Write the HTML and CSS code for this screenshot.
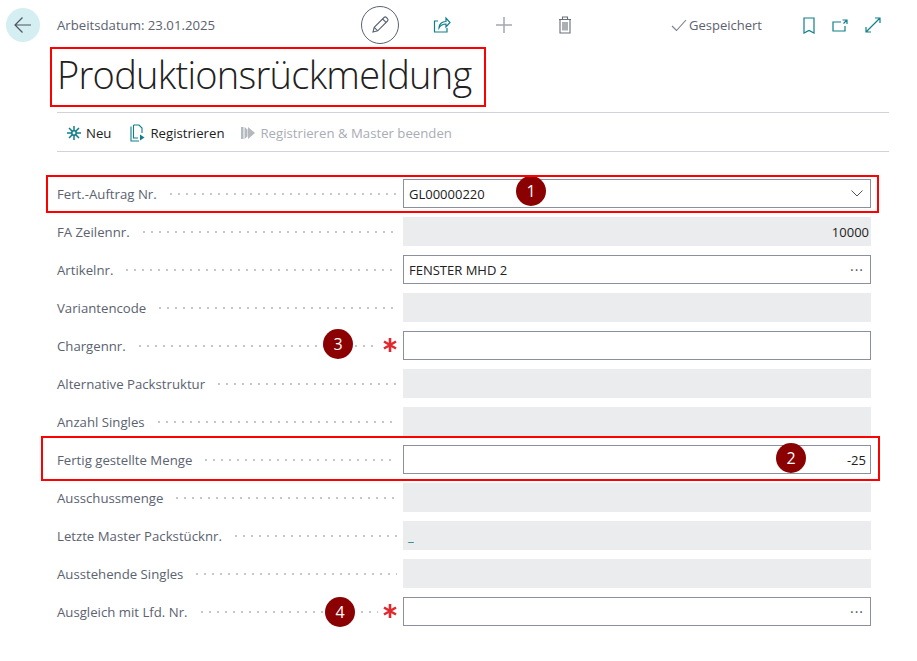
FILE: index.html
```html
<!DOCTYPE html>
<html lang="de">
<head>
    <meta charset="UTF-8">
    <title>Produktionsrückmeldung</title>
    <link rel="stylesheet" href="styles.css">
</head>
<body>
    <div class="topbar">
        <button class="back-btn" aria-label="Zurück">
            <svg width="20" height="20" viewBox="0 0 20 20" fill="none" stroke="#4f5563" stroke-width="1.2"><path d="M18 10H2.500M9.500 2.500 2 10l7.500 7.500"/></svg>
        </button>
        <div class="work-date">Arbeitsdatum: 23.01.2025</div>
        <button class="edit-btn" aria-label="Bearbeiten">
            <svg width="20" height="20" viewBox="0 0 20 20" fill="none" stroke="#5b6270" stroke-width="1.1"><path d="M3 17l1.200-4.700L14 2.500a1.700 1.700 0 0 1 2.400 0l1.100 1.100a1.700 1.700 0 0 1 0 2.400L7.700 15.800zM4.200 12.300l3.500 3.500M12.600 4l3.400 3.400"/></svg>
        </button>
        <svg class="icon-share" width="18" height="18" viewBox="0 0 18 18" fill="none" stroke="#0f7f8a" stroke-width="1.2"><path d="M5 5H1.500v11h12.500v-4M6 12c0-4 3-6.500 7-6.500V2l4 4.500-4 4.500V8c-3 0-5.500 1.500-7 4z"/></svg>
        <svg class="icon-plus" width="18" height="18" viewBox="0 0 18 18" fill="none" stroke="#a3a8b0" stroke-width="1.5"><path d="M9 1v16M1 9h16"/></svg>
        <svg class="icon-trash" width="14" height="18" viewBox="0 0 14 18" fill="none" stroke="#686e7a" stroke-width="1.1"><path d="M1 3.500h12M4.500 3.500V1h5v2.500M2 3.500V17h10V3.500M5 6v8.500M7 6v8.500M9 6v8.500"/></svg>
        <div class="saved">
            <svg width="16" height="14" viewBox="0 0 16 14" fill="none" stroke="#777d89" stroke-width="1.1"><path d="M1 8l4.500 4.500L15 2"/></svg>
            <span>Gespeichert</span>
        </div>
        <svg class="icon-bookmark" width="12" height="17" viewBox="0 0 12 17" fill="none" stroke="#0f7f8a" stroke-width="1.2"><path d="M1 1h10v15l-5-2.500L1 16z"/></svg>
        <svg class="icon-open" width="16" height="13" viewBox="0 0 16 13" fill="none" stroke="#0f7f8a" stroke-width="1.2"><path d="M9 3H1v9h12V7M10.500 1H15v4M15 1l-3.500 3.500"/></svg>
        <svg class="icon-expand" width="16" height="16" viewBox="0 0 16 16" fill="none" stroke="#0f7f8a" stroke-width="1.2"><path d="M10 1h5v5M15 1 1 15M1 10v5h5"/></svg>
    </div>

    <h1 class="title">Produktionsrückmeldung</h1>

    <div class="actions">
        <span class="action">
            <svg width="14" height="14" viewBox="0 0 14 14" fill="none" stroke="#0f7f8a" stroke-width="1.5"><path d="M7 0v14M0 7h14M2 2l10 10M12 2 2 12"/><circle cx="7" cy="7" r="2.200" fill="#fff"/></svg>
            Neu
        </span>
        <span class="action">
            <svg width="15" height="18" viewBox="0 0 15 18" fill="none" stroke="#0f7f8a" stroke-width="1.1"><path d="M3.500 1H9l3 3v5M3.500 1v13H8M1 2.500V17h8"/><path d="M10 10.500l4.500 3-4.500 3z" fill="#0f7f8a" stroke="none"/></svg>
            Registrieren
        </span>
        <span class="action disabled">
            <svg width="14" height="14" viewBox="0 0 14 14" fill="#b4b8bf"><path d="M0 1h2.500v12H0zM3.500 1l3 2.500v7l-3 2.500zM7 1l7 6-7 6z"/></svg>
            Registrieren &amp; Master beenden
        </span>
    </div>

    <div class="form">
        <div class="row">
            <div class="label"><span>Fert.-Auftrag Nr.</span><i class="dots"></i></div>
            <div class="field input">
                <span class="value">GL00000220</span>
                <svg class="chevron" width="12" height="7" viewBox="0 0 12 7" fill="none" stroke="#4f5563"><path d="M.5.500 6 6l5.500-5.500"/></svg>
            </div>
            <b class="callout callout-1">1</b>
        </div>
        <div class="row">
            <div class="label"><span>FA Zeilennr.</span><i class="dots"></i></div>
            <div class="field readonly"><span class="value right">10000</span></div>
        </div>
        <div class="row">
            <div class="label"><span>Artikelnr.</span><i class="dots"></i></div>
            <div class="field input"><span class="value">FENSTER MHD 2</span><span class="more">···</span></div>
        </div>
        <div class="row">
            <div class="label"><span>Variantencode</span><i class="dots"></i></div>
            <div class="field readonly"></div>
        </div>
        <div class="row">
            <div class="label"><span>Chargennr.</span><i class="dots"></i>
                <svg class="req" width="14" height="14" viewBox="0 0 14 14" fill="none" stroke="#e0282e" stroke-width="2.6"><path d="M7 0v14M1 3.500l12 7M13 3.500l-12 7"/></svg>
            </div>
            <div class="field input"></div>
            <b class="callout callout-3">3</b>
        </div>
        <div class="row">
            <div class="label"><span>Alternative Packstruktur</span><i class="dots"></i></div>
            <div class="field readonly"></div>
        </div>
        <div class="row">
            <div class="label"><span>Anzahl Singles</span><i class="dots"></i></div>
            <div class="field readonly"></div>
        </div>
        <div class="row">
            <div class="label"><span>Fertig gestellte Menge</span><i class="dots"></i></div>
            <div class="field input qty"><span class="value right">-25</span></div>
            <b class="callout callout-2">2</b>
        </div>
        <div class="row">
            <div class="label"><span>Ausschussmenge</span><i class="dots"></i></div>
            <div class="field readonly"></div>
        </div>
        <div class="row">
            <div class="label"><span>Letzte Master Packstücknr.</span><i class="dots"></i></div>
            <div class="field readonly"><span class="value link">_</span></div>
        </div>
        <div class="row">
            <div class="label"><span>Ausstehende Singles</span><i class="dots"></i></div>
            <div class="field readonly"></div>
        </div>
        <div class="row">
            <div class="label"><span>Ausgleich mit Lfd. Nr.</span><i class="dots"></i>
                <svg class="req" width="14" height="14" viewBox="0 0 14 14" fill="none" stroke="#e0282e" stroke-width="2.6"><path d="M7 0v14M1 3.500l12 7M13 3.500l-12 7"/></svg>
            </div>
            <div class="field input"><span class="more">···</span></div>
            <b class="callout callout-4">4</b>
        </div>
    </div>

    <!-- red marks drawn on top of the screenshot -->
    <div class="mark mark-title"></div>
    <div class="mark mark-order"></div>
    <div class="mark mark-qty"></div>
</body>
</html>
```

FILE: styles.css
```css
body {
    font-family: "Open Sans", "Noto Sans", sans-serif;
    font-size: 13.2px;
    margin: 0;
    padding: 6px 28px 0 6px;
    background: white;
    color: #212121;
    position: relative;
    overflow: hidden;
    height: 655px;
    box-sizing: border-box;
}
button {
    border: none;
    padding: 0;
    background: none;
    display: flex;
    align-items: center;
    justify-content: center;
}
.topbar {
    display: flex;
    align-items: center;
    height: 38px;
}
.back-btn {
    width: 34px;
    height: 34px;
    border-radius: 50%;
    background: #d5eef1;
    flex: none;
    margin-right: 17px;
}
.work-date {
    width: 304px;
    color: #5b6270;
}
.edit-btn {
    width: 38px;
    height: 38px;
    box-sizing: border-box;
    border: 1px solid #5b6270;
    border-radius: 50%;
    margin-right: 34px;
}
.icon-share { margin-right: 44px; }
.icon-plus { margin-right: 45px; }
.icon-trash { margin-right: 99px; }
.saved {
    display: flex;
    align-items: center;
    gap: 2px;
    width: 132px;
    color: #5b6270;
    font-size: 13px;
}
.icon-bookmark { margin-right: 17px; }
.icon-open { margin-right: 17px; }
.title {
    font-weight: 300;
    font-size: 38px;
    line-height: 52px;
    margin: 4px 0 0 51px;
    color: #212121;
    letter-spacing: -0.72px;
}
.actions {
    display: flex;
    align-items: center;
    gap: 17px;
    height: 38px;
    margin: 12px 0 0 51px;
    padding-left: 10px;
    border-top: 1px solid #d0d3d8;
    border-bottom: 1px solid #d0d3d8;
}
.action {
    display: flex;
    align-items: center;
    gap: 5px;
    padding-top: 1px;
}
.action:first-child {
    margin-right: 2px;
}
.action.disabled {
    color: #a9adb5;
}
.form {
    margin: 27px 18px 0 51px;
    display: flex;
    flex-direction: column;
    gap: 9px;
}
.row {
    display: grid;
    grid-template-columns: 346px 468px;
    height: 29px;
    position: relative;
}
.label {
    display: flex;
    align-items: center;
    color: #5b6270;
    padding-right: 6px;
}
.dots {
    flex: 1;
    height: 2px;
    margin-left: 10px;
    background: radial-gradient(circle, #c3c6cc 0.8px, transparent 1px) 0 0 / 8px 2px repeat-x;
}
.req {
    flex: none;
    margin: 0 0 2px 5px;
}
.field {
    box-sizing: border-box;
    display: flex;
    align-items: center;
    padding: 0 2px 0 5px;
}
.input {
    border: 1px solid #8a909c;
}
.qty {
    padding-right: 4px;
}
.readonly {
    background: #ebecee;
}
.value {
    flex: 1;
    color: #212121;
    font-size: 13px;
}
.right {
    text-align: right;
}
.link {
    color: #0f7f8a;
}
.chevron {
    margin-right: 5px;
}
.more {
    margin-left: auto;
    margin-right: 4px;
    color: #4f5563;
    font-size: 14px;
    letter-spacing: 1px;
}
.callout {
    position: absolute;
    width: 30px;
    height: 30px;
    border-radius: 50%;
    background: #8b0000;
    color: white;
    font-weight: 400;
    font-size: 16px;
    line-height: 30px;
    text-align: center;
}
.callout-1 { left: 459px; top: -3px; }
.callout-2 { left: 719px; top: -2px; }
.callout-3 { left: 266px; top: -2px; }
.callout-4 { left: 268px; top: 0; }
.mark {
    position: absolute;
    box-sizing: border-box;
    border: 2px solid #f00;
}
.mark-title { left: 50px; top: 47px; width: 436px; height: 60px; }
.mark-order { left: 46px; top: 175px; width: 833px; height: 38px; }
.mark-qty { left: 41px; top: 436px; width: 839px; height: 45px; }
```
